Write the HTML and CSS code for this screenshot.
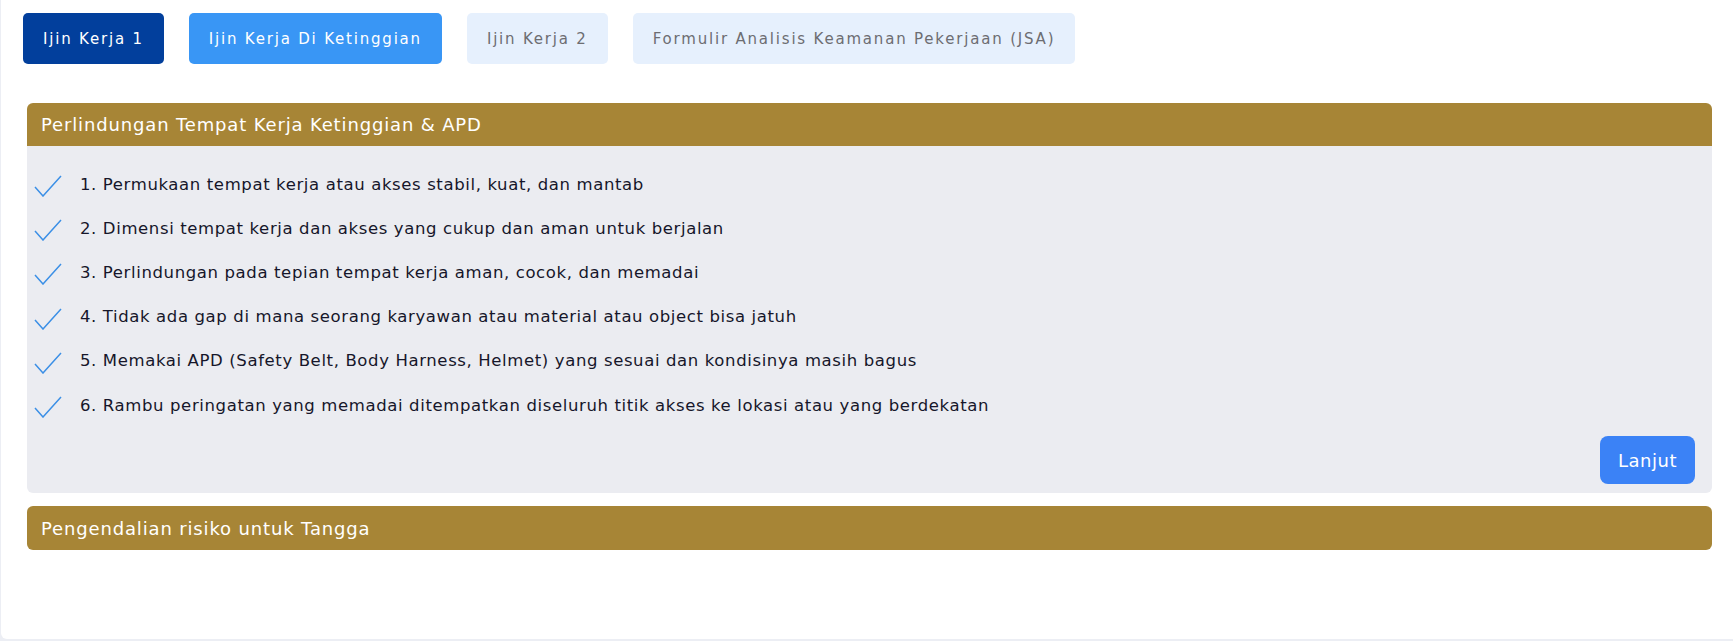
FILE: index.html
```html
<!DOCTYPE html>
<html lang="id">
<head>
<meta charset="utf-8">
<title>Ijin Kerja Di Ketinggian</title>
<link rel="stylesheet" href="styles.css">
</head>
<body>
<div class="card">
  <nav class="tabs">
    <button class="tab tab-dark">Ijin Kerja 1</button>
    <button class="tab tab-active">Ijin Kerja Di Ketinggian</button>
    <button class="tab tab-light">Ijin Kerja 2</button>
    <button class="tab tab-light">Formulir Analisis Keamanan Pekerjaan (JSA)</button>
  </nav>

  <div class="sections">
    <section class="section">
      <div class="section-head">Perlindungan Tempat Kerja Ketinggian &amp; APD</div>
      <div class="section-body">
        <ul class="checklist">
          <li class="item"><svg class="check" viewBox="0 0 28 22"><path d="M1 12 L9 21 L27 1"/></svg><span>1. Permukaan tempat kerja atau akses stabil, kuat, dan mantab</span></li>
          <li class="item"><svg class="check" viewBox="0 0 28 22"><path d="M1 12 L9 21 L27 1"/></svg><span>2. Dimensi tempat kerja dan akses yang cukup dan aman untuk berjalan</span></li>
          <li class="item"><svg class="check" viewBox="0 0 28 22"><path d="M1 12 L9 21 L27 1"/></svg><span>3. Perlindungan pada tepian tempat kerja aman, cocok, dan memadai</span></li>
          <li class="item"><svg class="check" viewBox="0 0 28 22"><path d="M1 12 L9 21 L27 1"/></svg><span>4. Tidak ada gap di mana seorang karyawan atau material atau object bisa jatuh</span></li>
          <li class="item"><svg class="check" viewBox="0 0 28 22"><path d="M1 12 L9 21 L27 1"/></svg><span>5. Memakai APD (Safety Belt, Body Harness, Helmet) yang sesuai dan kondisinya masih bagus</span></li>
          <li class="item"><svg class="check" viewBox="0 0 28 22"><path d="M1 12 L9 21 L27 1"/></svg><span>6. Rambu peringatan yang memadai ditempatkan diseluruh titik akses ke lokasi atau yang berdekatan</span></li>
        </ul>
        <div class="actions">
          <button class="btn-next">Lanjut</button>
        </div>
      </div>
    </section>

    <section class="section">
      <div class="section-head section-head-closed">Pengendalian risiko untuk Tangga</div>
    </section>
  </div>
</div>
</body>
</html>
```

FILE: styles.css
```css
* { box-sizing: border-box; }

html, body {
  margin: 0;
  padding: 0;
  background: #eceef4;
}

body {
  font-family: "DejaVu Sans", "Liberation Sans", sans-serif;
  color: #1c1c2e;
}

.card {
  background: #ffffff;
  margin-left: 1px;
  height: 639px;
  border-bottom-left-radius: 6px;
  padding: 13px 0 0 22px;
}

.tabs {
  display: flex;
  gap: 25px;
}

.tab {
  font-family: inherit;
  height: 51px;
  padding: 0 20px;
  border: none;
  border-radius: 5px;
  font-size: 15px;
  letter-spacing: 1.8px;
  cursor: pointer;
}

.tab-dark { background: #023f9c; color: #ffffff; }
.tab-active { background: #3996f5; color: #ffffff; }
.tab-light { background: #e6f0fd; color: #6d6d72; }

.sections {
  margin-top: 39px;
  padding-left: 4px;
  padding-right: 21px;
  display: flex;
  flex-direction: column;
  gap: 13px;
}

.section-head {
  background: #a78536;
  color: #ffffff;
  height: 43px;
  display: flex;
  align-items: center;
  padding-left: 14px;
  font-size: 18px;
  letter-spacing: 0.85px;
  border-radius: 6px 6px 0 0;
}

.section-head-closed {
  border-radius: 6px;
  height: 44px;
}

.section-body {
  background: #ebecf1;
  border-radius: 0 0 6px 6px;
  padding: 16px 17px 9px 7px;
}

.checklist {
  list-style: none;
  margin: 0;
  padding: 0;
}

.item {
  height: 44.2px;
  display: flex;
  align-items: center;
  gap: 18px;
  font-size: 16.5px;
  letter-spacing: 0.62px;
  color: #16162a;
}

.check {
  width: 28px;
  height: 22px;
  margin-top: 4px;
  flex: none;
  fill: none;
  stroke: #3b8fe6;
  stroke-width: 1.5;
}

.actions {
  display: flex;
  justify-content: flex-end;
  margin-top: 9px;
}

.btn-next {
  font-family: inherit;
  background: #3b82f6;
  color: #ffffff;
  border: none;
  border-radius: 8px;
  width: 95px;
  height: 48px;
  font-size: 18px;
  letter-spacing: 0.5px;
  cursor: pointer;
}
```
